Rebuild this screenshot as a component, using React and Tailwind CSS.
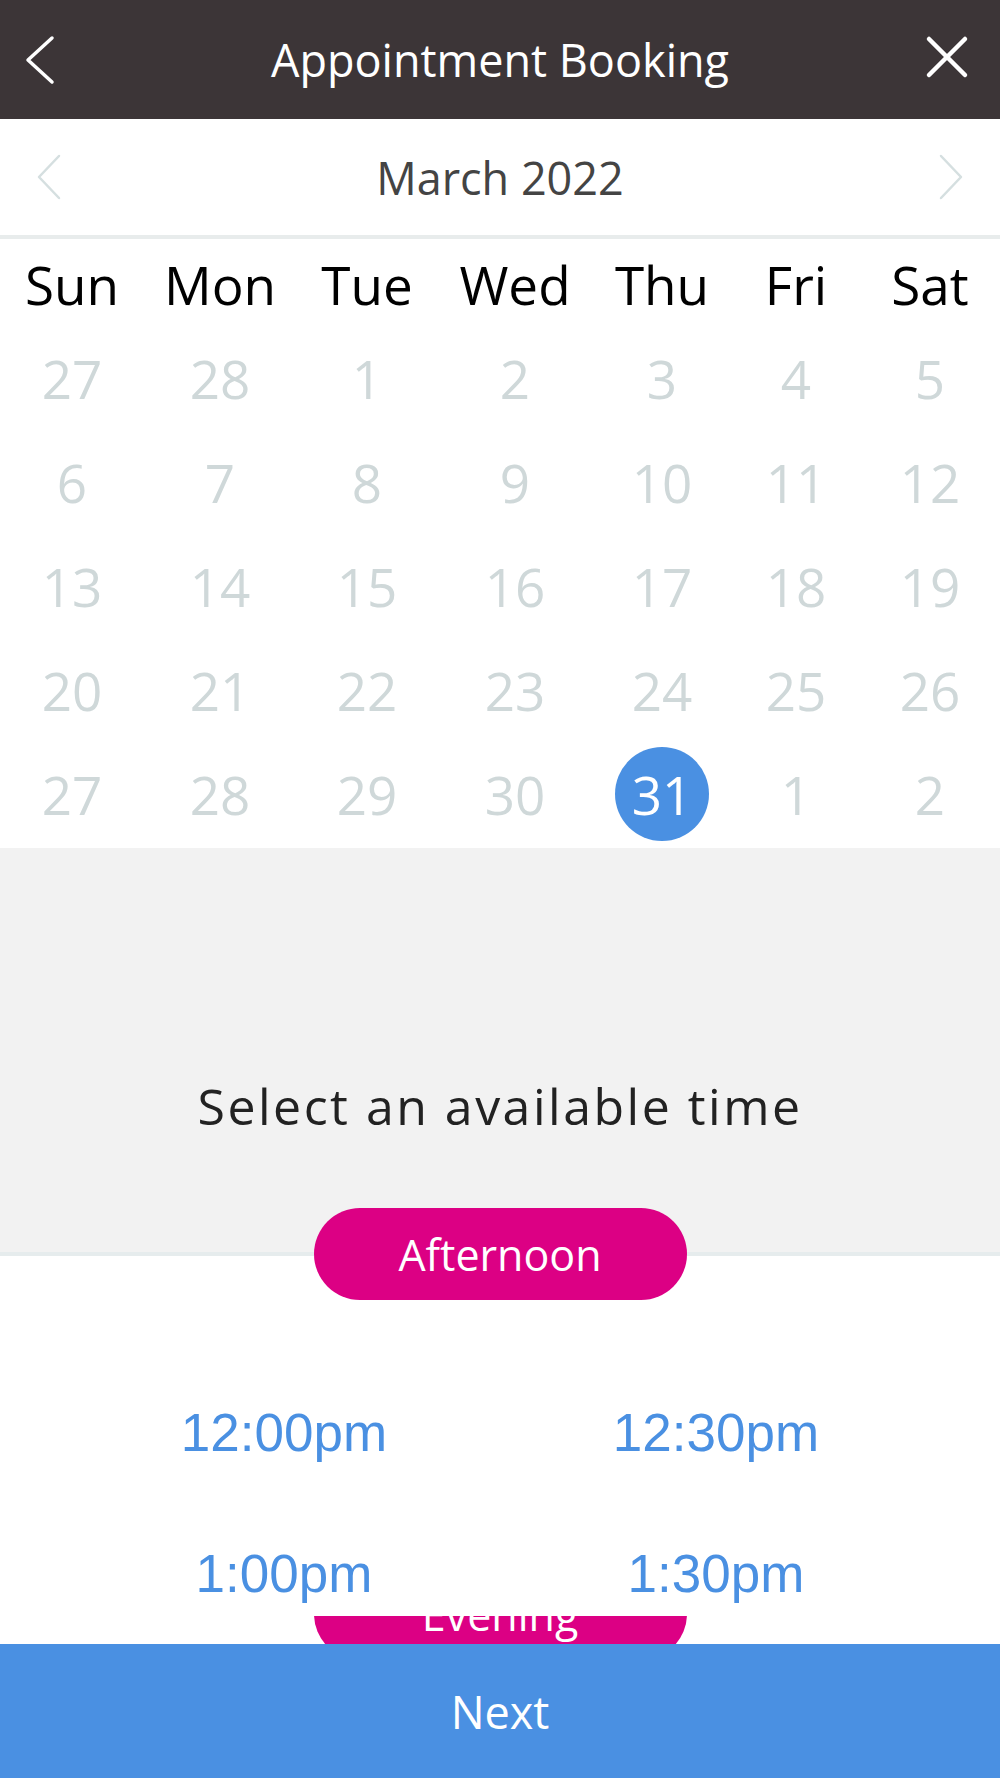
import React from "react";

const OS = { fontFamily: '"Open Sans", "Noto Sans", sans-serif' };
const AR = { fontFamily: '"Liberation Sans", Arial, sans-serif' };

const weeks = [
  [27, 28, 1, 2, 3, 4, 5],
  [6, 7, 8, 9, 10, 11, 12],
  [13, 14, 15, 16, 17, 18, 19],
  [20, 21, 22, 23, 24, 25, 26],
  [27, 28, 29, 30, 31, 1, 2],
];
const days = ["Sun", "Mon", "Tue", "Wed", "Thu", "Fri", "Sat"];
const cols = "grid grid-cols-[144px_152px_142px_154px_140px_128px_140px]";

export default function App() {
  return (
    <div className="w-[1000px] h-[1778px] bg-white overflow-hidden" style={OS}>
      {/* Header */}
      <div className="h-[119px] bg-[#3c3537] grid grid-cols-[1fr_auto_1fr] items-center">
        <div className="pl-[25px] flex items-center">
          <svg width="30" height="50" viewBox="0 0 30 50" fill="none">
            <polyline points="27,3 3,25 27,47" stroke="#fff" strokeWidth="3.5" strokeLinecap="round" strokeLinejoin="round" />
          </svg>
        </div>
        <div className="text-white text-[45px] leading-none">Appointment Booking</div>
        <div className="pr-[31px] flex justify-end items-center">
          <svg width="44" height="44" viewBox="0 0 44 44" fill="none" className="mb-[6px]">
            <line x1="4" y1="4" x2="40" y2="40" stroke="#fff" strokeWidth="4.5" strokeLinecap="round" />
            <line x1="40" y1="4" x2="4" y2="40" stroke="#fff" strokeWidth="4.5" strokeLinecap="round" />
          </svg>
        </div>
      </div>

      {/* Month row */}
      <div className="h-[116px] flex items-center justify-between px-[37px]">
        <svg width="24" height="50" viewBox="0 0 24 50" fill="none">
          <polyline points="22,4 2,25 22,46" stroke="#d5dfe0" strokeWidth="2.5" strokeLinecap="round" strokeLinejoin="round" />
        </svg>
        <div className="text-[45px] leading-none text-[#444444]">March 2022</div>
        <svg width="24" height="50" viewBox="0 0 24 50" fill="none">
          <polyline points="2,4 22,25 2,46" stroke="#d5dfe0" strokeWidth="2.5" strokeLinecap="round" strokeLinejoin="round" />
        </svg>
      </div>
      <div className="h-[4px] bg-[#e8ecec]" />

      {/* Calendar */}
      <div className="pb-[2px]">
        <div className={`${cols} h-[87px] pt-[3px] items-center`}>
          {days.map((d) => (
            <div key={d} className="text-center text-[53px] leading-none text-black">
              {d}
            </div>
          ))}
        </div>
        {weeks.map((w, i) => (
          <div key={i} className={`${cols} h-[104px] items-center`}>
            {w.map((n, j) => {
              const sel = i === 4 && n === 31;
              return (
                <div key={j} className="flex justify-center items-center">
                  {sel ? (
                    <div className="w-[94px] h-[94px] rounded-full bg-[#4a90e2] flex items-center justify-center text-white text-[53px] leading-none">
                      {n}
                    </div>
                  ) : (
                    <span className="text-[53px] leading-none text-[#cfd8d9]">{n}</span>
                  )}
                </div>
              );
            })}
          </div>
        ))}
      </div>

      {/* Gray section */}
      <div className="h-[404px] bg-[#f2f2f2] pt-[228px]">
        <div className="text-center text-[50px] leading-[60px] tracking-[2.5px] text-[#222222]">
          Select an available time
        </div>
      </div>
      <div className="h-[4px] bg-[#e6eced]" />

      {/* Afternoon */}
      <div className="relative -mt-[48px] mx-auto w-[373px] h-[92px] rounded-full bg-[#dc0084] flex items-center justify-center text-white text-[43px] leading-none">
        Afternoon
      </div>

      {/* Times */}
      <div className="px-[68px] pt-[61px]" style={AR}>
        <div className="grid grid-cols-2 h-[142px] items-center text-[#4a90e2] text-[53px] leading-none">
          <div className="text-center">12:00pm</div>
          <div className="text-center">12:30pm</div>
        </div>
        <div className="grid grid-cols-2 h-[113px] pt-[41px] text-[#4a90e2] text-[53px] leading-[60px]">
          <div className="text-center">1:00pm</div>
          <div className="text-center">1:30pm</div>
        </div>
      </div>

      {/* Evening (clipped) */}
      <div className="h-[28px] overflow-hidden">
        <div className="-mt-[48px] mx-auto w-[373px] h-[92px] rounded-full bg-[#dc0084] flex items-center justify-center text-white text-[43px] leading-none">
          Evening
        </div>
      </div>

      {/* Next */}
      <div className="h-[134px] bg-[#4a90e2] flex items-center justify-center text-white text-[45px] leading-none">
        Next
      </div>
    </div>
  );
}
